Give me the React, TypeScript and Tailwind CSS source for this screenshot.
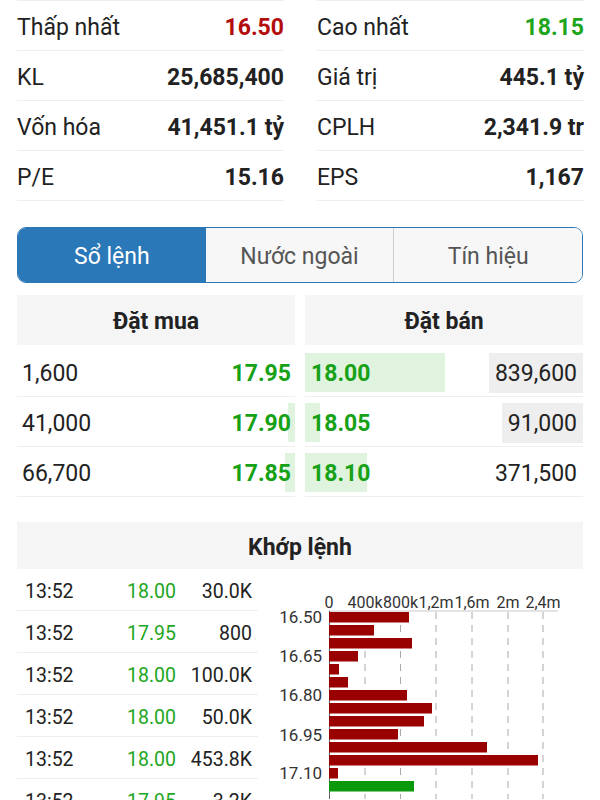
import React from "react";

const stats: [string, string, string?][][] = [
  [
    ["Thấp nhất", "16.50", "red"],
    ["KL", "25,685,400"],
    ["Vốn hóa", "41,451.1 tỷ"],
    ["P/E", "15.16"],
  ],
  [
    ["Cao nhất", "18.15", "green"],
    ["Giá trị", "445.1 tỷ"],
    ["CPLH", "2,341.9 tr"],
    ["EPS", "1,167"],
  ],
];

const buys = [
  { vol: "1,600", price: "17.95", bar: 0 },
  { vol: "41,000", price: "17.90", bar: 7 },
  { vol: "66,700", price: "17.85", bar: 10 },
];
const sells = [
  { vol: "839,600", price: "18.00", bar: 140, hl: true },
  { vol: "91,000", price: "18.05", bar: 15, hl: true },
  { vol: "371,500", price: "18.10", bar: 62, hl: false },
];

const trades = [
  ["13:52", "18.00", "30.0K"],
  ["13:52", "17.95", "800"],
  ["13:52", "18.00", "100.0K"],
  ["13:52", "18.00", "50.0K"],
  ["13:52", "18.00", "453.8K"],
  ["13:52", "17.95", "3.2K"],
];

const barEnds = [409, 374, 412, 358, 339, 348, 407, 432, 424, 398, 487, 538, 338, 414];
const grid = [365, 400.5, 436, 472, 508, 543];
const xLabels = ["0", "400k", "800k", "1,2m", "1,6m", "2m", "2,4m"];
const yLabels = [
  ["16.50", 49],
  ["16.65", 88],
  ["16.80", 127],
  ["16.95", 167],
  ["17.10", 205],
] as const;

function Chart() {
  const ox = 258;
  const x0 = 329 - ox;
  return (
    <svg width={342} height={230} className="block shrink-0" style={{ fontFamily: "Roboto, sans-serif" }}>
      {[329, ...grid].map((gx, i) => (
        <text key={i} x={gx - ox} y={34.5} fontSize={16} fill="#333" textAnchor="middle" dominantBaseline="middle">
          {xLabels[i]}
        </text>
      ))}
      <line x1={x0} y1={42} x2={558 - ox} y2={42} stroke="#c8c8c8" strokeWidth={1} />
      {grid.map((gx, i) => (
        <line key={i} x1={gx - ox} y1={43} x2={gx - ox} y2={230} stroke="#aaa" strokeWidth={1} strokeDasharray="7 6" />
      ))}
      <line x1={x0 + 0.5} y1={42} x2={x0 + 0.5} y2={230} stroke="#666" strokeWidth={1} />
      {barEnds.map((e, i) => (
        <rect
          key={i}
          x={x0}
          y={43 + 13 * i}
          width={e - 329}
          height={10.5}
          fill={i === 13 ? "#0a990a" : "#990000"}
        />
      ))}
      {yLabels.map(([t, y]) => (
        <text key={t} x={322 - ox} y={y + 1} fontSize={17} fill="#333" textAnchor="end" dominantBaseline="middle">
          {t}
        </text>
      ))}
    </svg>
  );
}

export default function App() {
  return (
    <div
      className="w-[600px] h-[800px] overflow-hidden bg-white text-[#222]"
      style={{ fontFamily: "Roboto, 'Noto Sans', sans-serif" }}
    >
      {/* Stats */}
      <div className="grid grid-cols-2 gap-x-[33px] pl-[17px] pr-[16px]">
        {stats.map((col, ci) => (
          <div key={ci} className="border-t border-[#eeeeee]">
            {col.map(([label, value, color]) => (
              <div key={label} className="h-[50px] pt-[6px] border-b border-[#eeeeee] flex items-center justify-between">
                <span className="text-[23px]">{label}</span>
                <span
                  className={
                    "text-[23px] font-bold " +
                    (color === "red" ? "text-[#b30d0d]" : color === "green" ? "text-[#1ea51e]" : "text-[#222]")
                  }
                >
                  {value}
                </span>
              </div>
            ))}
          </div>
        ))}
      </div>

      {/* Tabs */}
      <div className="mt-[26px] mx-[17px] h-[56px] flex rounded-[9px] border-[1.5px] border-[#2f77b4] overflow-hidden">
        <div className="flex-1 flex items-center justify-center pt-[5px] bg-[#2a78b7] text-white text-[23px]">Sổ lệnh</div>
        <div className="flex-1 flex items-center justify-center pt-[5px] bg-[#f7f7f7] text-[#555] text-[23px]">
          Nước ngoài
        </div>
        <div className="flex-1 flex items-center justify-center pt-[5px] bg-[#f7f7f7] text-[#555] text-[23px] border-l border-[#cfcfcf]">
          Tín hiệu
        </div>
      </div>

      {/* Order book */}
      <div className="mt-[12px] mx-[17px] grid grid-cols-2 gap-x-[10px]">
        <div>
          <div className="h-[50px] pt-[5px] bg-[#f5f5f5] flex items-center justify-center text-[23px] font-bold">Đặt mua</div>
          <div className="mt-[2px]">
            {buys.map((r) => (
              <div key={r.price} className="relative h-[50px] pt-[5px] border-b border-[#eeeeee] flex items-center justify-between pl-[5px] pr-[4px]">
                {r.bar > 0 && (
                  <div className="absolute right-0 top-[6px] h-[39px] bg-[#dff3df]" style={{ width: r.bar }} />
                )}
                <span className="relative text-[23px]">{r.vol}</span>
                <span className="relative text-[23px] font-bold text-[#16a116]">{r.price}</span>
              </div>
            ))}
          </div>
        </div>
        <div>
          <div className="h-[50px] pt-[5px] bg-[#f5f5f5] flex items-center justify-center text-[23px] font-bold">Đặt bán</div>
          <div className="mt-[2px]">
            {sells.map((r) => (
              <div key={r.price} className="relative h-[50px] border-b border-[#eeeeee] flex items-center justify-between pl-[6px]">
                <div className="absolute left-0 top-[6px] h-[39px] bg-[#dff3df]" style={{ width: r.bar }} />
                <span className="relative pt-[5px] text-[23px] font-bold text-[#16a116]">{r.price}</span>
                <span
                  className={
                    "relative h-[40px] mt-[2px] pt-[4px] flex items-center px-[6px] text-[23px] " + (r.hl ? "bg-[#eeeeee]" : "")
                  }
                >
                  {r.vol}
                </span>
              </div>
            ))}
          </div>
        </div>
      </div>

      {/* Khớp lệnh */}
      <div className="mt-[25px] mx-[17px] h-[47px] pt-[5px] bg-[#f5f5f5] flex items-center justify-center text-[23px] font-bold">
        Khớp lệnh
      </div>
      <div className="flex">
        <div className="ml-[17px] w-[241px] shrink-0">
          {trades.map((t, i) => (
            <div key={i} className="h-[42px] pt-[5px] border-b border-[#eeeeee] flex items-center pl-[8px] pr-[6px] text-[19.5px]">
              <span className="w-[60px]">{t[0]}</span>
              <span className="w-[91px] text-right text-[#22a622]">{t[1]}</span>
              <span className="flex-1 text-right">{t[2]}</span>
            </div>
          ))}
        </div>
        <Chart />
      </div>
    </div>
  );
}
